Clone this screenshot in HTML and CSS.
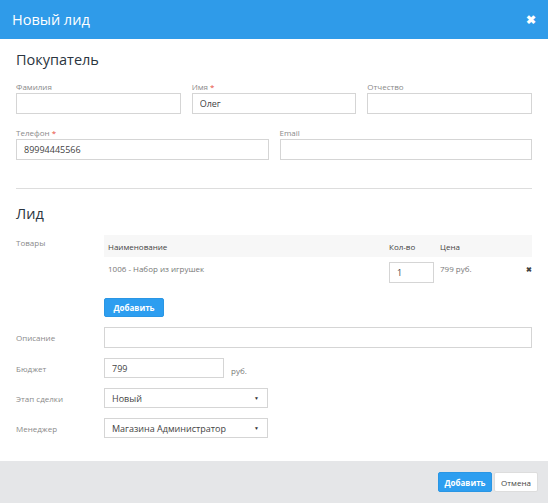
FILE: index.html
```html
<!DOCTYPE html>
<html lang="ru">
<head>
  <meta charset="UTF-8" />
  <meta name="viewport" content="width=device-width, initial-scale=1.0" />
  <link rel="stylesheet" href="styles.css">
</head>
<body>
  <div class="modal">
    <div class="modal-header">
      <span class="modal-title">Новый лид</span>
      <span class="close">&#10006;</span>
    </div>

    <div class="modal-body">
      <h2>Покупатель</h2>

      <div class="grid grid-3">
        <div class="field">
          <label>Фамилия</label>
          <input type="text" value="" />
        </div>
        <div class="field">
          <label>Имя <span class="req">*</span></label>
          <input type="text" value="Олег" />
        </div>
        <div class="field">
          <label>Отчество</label>
          <input type="text" value="" />
        </div>
      </div>

      <div class="grid grid-2">
        <div class="field">
          <label>Телефон <span class="req">*</span></label>
          <input type="text" value="89994445566" />
        </div>
        <div class="field">
          <label>Email</label>
          <input type="text" value="" />
        </div>
      </div>

      <hr class="divider" />

      <h2 class="lead-title">Лид</h2>

      <div class="row row-goods">
        <div class="row-label">Товары</div>
        <div class="row-content">
          <div class="goods-table">
            <div class="goods-head">
              <span class="col-name">Наименование</span>
              <span class="col-qty">Кол-во</span>
              <span class="col-price">Цена</span>
              <span class="col-del"></span>
            </div>
            <div class="goods-row">
              <span class="col-name">1006 - Набор из игрушек</span>
              <span class="col-qty"><input type="text" class="qty" value="1" /></span>
              <span class="col-price">799 руб.</span>
              <span class="col-del">&#10006;</span>
            </div>
          </div>
          <button class="btn btn-blue">Добавить</button>
        </div>
      </div>

      <div class="row">
        <div class="row-label">Описание</div>
        <div class="row-content"><input type="text" value="" /></div>
      </div>

      <div class="row">
        <div class="row-label">Бюджет</div>
        <div class="row-content inline">
          <input type="text" class="budget" value="799" />
          <span class="unit">руб.</span>
        </div>
      </div>

      <div class="row">
        <div class="row-label">Этап сделки</div>
        <div class="row-content">
          <div class="select">Новый<span class="arrow">&#9660;</span></div>
        </div>
      </div>

      <div class="row">
        <div class="row-label">Менеджер</div>
        <div class="row-content">
          <div class="select">Магазина Администратор<span class="arrow">&#9660;</span></div>
        </div>
      </div>
    </div>

    <div class="modal-footer">
      <button class="btn btn-blue">Добавить</button>
      <button class="btn btn-white">Отмена</button>
    </div>
  </div>
</body>
</html>
```

FILE: styles.css
```css
html, body {
  margin: 0;
  padding: 0;
  font-family: "Open Sans", Arial, sans-serif;
  background-color: #ffffff;
  color: #333333;
}

.modal {
  width: 548px;
  height: 503px;
  display: flex;
  flex-direction: column;
}

.modal-header {
  height: 39px;
  background-color: #2f9be9;
  color: #ffffff;
  display: flex;
  align-items: center;
  justify-content: space-between;
  padding: 0 12px 0 12px;
  box-sizing: border-box;
  flex-shrink: 0;
}

.modal-title {
  font-size: 14.5px;
}

.close {
  font-size: 12px;
  font-weight: bold;
  margin-top: -1px;
}

.modal-body {
  flex: 1;
  padding: 0 16px;
}

h2 {
  margin: 11px 0 12px 0;
  font-size: 14.5px;
  line-height: 20px;
  font-weight: normal;
  color: #2b3540;
}

.grid {
  display: grid;
  gap: 11px;
  margin-bottom: 14px;
}

.grid-3 {
  grid-template-columns: 1fr 1fr 1fr;
}

.grid-2 {
  grid-template-columns: 1fr 1fr;
}

.field label {
  display: block;
  font-size: 8px;
  color: #8a8a8a;
  line-height: 10px;
  margin-bottom: 1px;
}

.req {
  color: #e74c3c;
}

input {
  display: block;
  width: 100%;
  height: 21px;
  box-sizing: border-box;
  border: 1px solid #d5d5d5;
  padding: 0 7px;
  font-family: "Open Sans", Arial, sans-serif;
  font-size: 9px;
  color: #444444;
  outline: none;
}

.divider {
  border: none;
  border-top: 1px solid #dddddd;
  margin: 28px 0 0 0;
}

.lead-title {
  margin: 15px 0 11px 0;
}

.row {
  display: flex;
  align-items: center;
  margin-bottom: 10px;
}

.row-goods {
  align-items: flex-start;
}

.row-label {
  width: 88px;
  flex-shrink: 0;
  font-size: 8px;
  color: #8a8a8a;
}

.row-goods .row-label {
  padding-top: 2px;
}

.row-content {
  flex: 1;
}

.row-content.inline {
  display: flex;
  align-items: center;
}

.goods-table {
  font-size: 8px;
}

.goods-head, .goods-row {
  display: flex;
  padding: 0 0 0 4px;
}

.goods-head {
  background-color: #f7f7f7;
  height: 22px;
  align-items: center;
  color: #444444;
}

.goods-row {
  height: 33px;
  align-items: flex-start;
  color: #777777;
  padding-top: 5px;
  box-sizing: border-box;
}

.col-name {
  flex: 1;
}

.col-qty {
  width: 51px;
}

.col-price {
  width: 86px;
}

.col-del {
  width: 6px;
  color: #444444;
  font-size: 7px;
  font-weight: bold;
  padding-top: 3px;
}

.goods-row .col-name, .goods-row .col-price {
  padding-top: 1px;
}

input.qty {
  width: 45px;
  height: 21px;
}

.btn {
  font-family: "Open Sans", Arial, sans-serif;
  font-size: 8px;
  font-weight: bold;
  border-radius: 2px;
  cursor: pointer;
  height: 20px;
  padding: 0 10px;
}

.btn-blue {
  background-color: #2d9ef0;
  color: #ffffff;
  border: 1px solid #2a96e4;
}

.row-goods .btn-blue {
  display: block;
  margin-top: 8px;
  width: 60px;
  height: 19px;
  padding: 0;
}

.btn-white {
  background-color: #ffffff;
  color: #444444;
  border: 1px solid #dddddd;
  font-weight: normal;
}

input.budget {
  width: 120px;
  height: 20px;
}

.unit {
  font-size: 8px;
  color: #777777;
  margin-left: 7px;
  margin-top: 4px;
}

.select {
  width: 164px;
  height: 20px;
  box-sizing: border-box;
  border: 1px solid #d5d5d5;
  padding: 0 8px 0 7px;
  font-size: 9px;
  color: #444444;
  display: flex;
  align-items: center;
  justify-content: space-between;
}

.arrow {
  font-size: 5px;
  color: #333333;
}

.modal-footer {
  height: 42px;
  background-color: #e5e6e8;
  display: flex;
  align-items: center;
  justify-content: flex-end;
  gap: 2px;
  padding: 0 10px;
  flex-shrink: 0;
}

.modal-footer .btn-blue {
  width: 54px;
  padding: 0;
}

.modal-footer .btn-white {
  width: 44px;
  padding: 0;
}
```
